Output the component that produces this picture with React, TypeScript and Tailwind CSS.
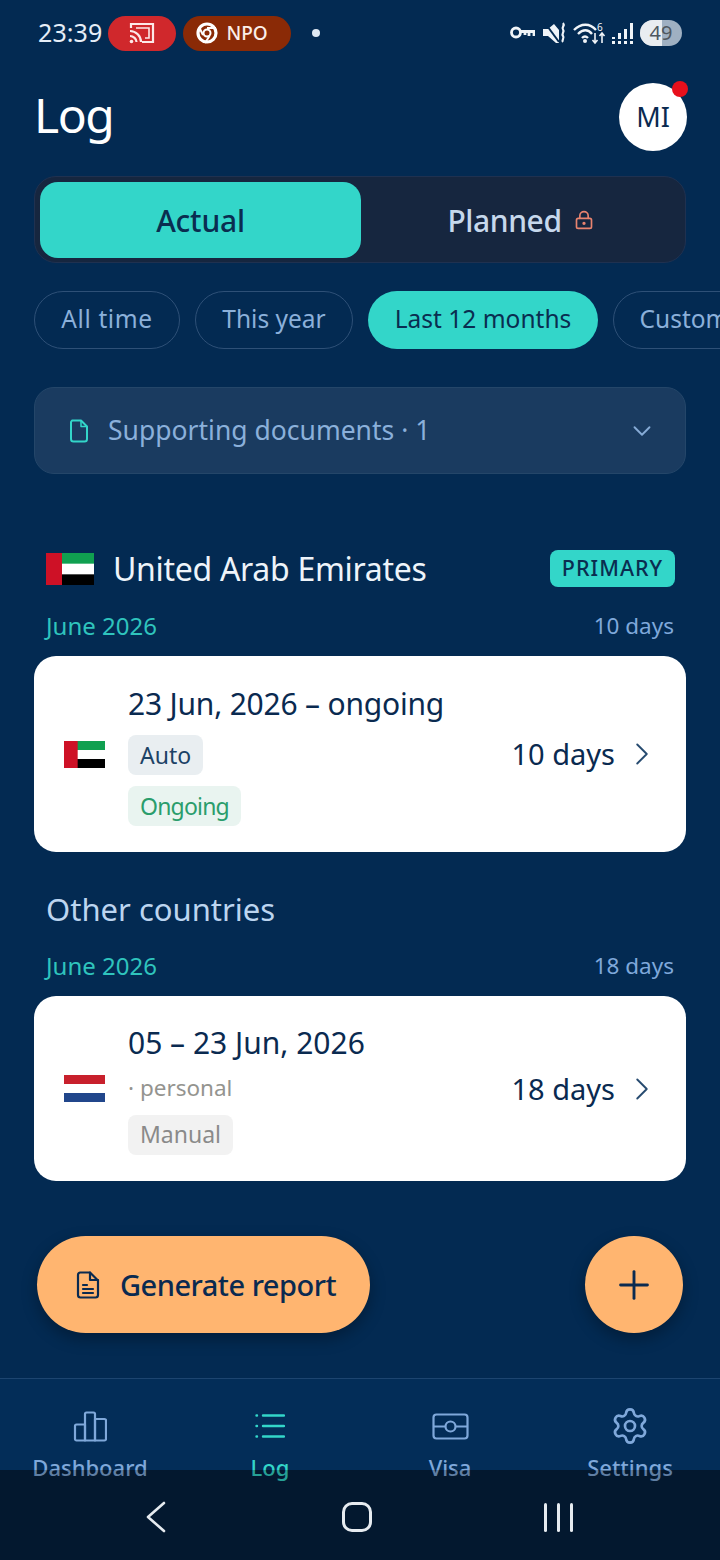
import React from "react";
import { ChevronRight, ChevronDown, Plus, Settings, LockKeyhole } from "lucide-react";

const UaeFlag = ({ w, h }: { w: number; h: number }) => (
  <svg width={w} height={h} viewBox="0 0 48 32" preserveAspectRatio="none" className="shrink-0">
    <rect width="48" height="32" fill="#fff" />
    <rect width="48" height="10.67" fill="#10a050" />
    <rect y="21.33" width="48" height="10.67" fill="#000" />
    <rect width="16" height="32" fill="#ce1126" />
  </svg>
);

const NlFlag = () => (
  <svg width="41" height="27" viewBox="0 0 41 27" className="shrink-0">
    <rect width="41" height="27" fill="#fff" />
    <rect width="41" height="9" fill="#c8202c" />
    <rect y="18" width="41" height="9" fill="#21468b" />
  </svg>
);

const Chip = ({ label, active, className = "" }: { label: string; active?: boolean; className?: string }) => (
  <div
    className={`h-[58px] rounded-full flex items-center justify-center pb-[2px] shrink-0 text-[24.5px] ${
      active ? "bg-[#33d6c9] text-[#0a2d50]" : "border border-[#2e5077] text-[#8bb0da]"
    } ${className}`}
  >
    {label}
  </div>
);

const Tag = ({ label, className }: { label: string; className: string }) => (
  <div className={`h-[40px] px-[12px] rounded-[8px] flex items-center text-[23px] w-fit ${className}`}>{label}</div>
);

const NavItem = ({ label, icon, active }: { label: string; icon: React.ReactNode; active?: boolean }) => (
  <div className={`flex-1 flex flex-col items-center ${active ? "text-[#33d6c9]" : "text-[#7fa8da]"}`}>
    <div className="h-[40px] flex items-center justify-center">{icon}</div>
    <div className="text-[22px] leading-[30px] mt-[6px] font-medium">{label}</div>
  </div>
);

export default function App() {
  return (
    <div
      className="relative w-[720px] h-[1560px] overflow-hidden bg-[#032a52] text-white"
      style={{ fontFamily: '"Noto Sans", sans-serif' }}
    >
      {/* status bar */}
      <div className="h-[66px] flex items-center pl-[38px] pr-[38px]">
        <span className="text-[25px] text-[#e6eef7] tracking-[0.1px]">23:39</span>
        <div className="ml-[6px] w-[68px] h-[35px] rounded-full bg-[#d0282c] flex items-center justify-center">
          <svg width="26" height="22" viewBox="0 0 26 22" fill="none" stroke="#fde8e8" strokeWidth="2.200">
            <path d="M2 6V2h22v18H13" />
            <path d="M1 9c6 0 11 5 11 11M1 14c3.500 0 6.500 3 6.500 6" />
            <circle cx="2.500" cy="19.500" r="1.800" fill="#fde8e8" stroke="none" />
            <path d="M7 6h13v10h-4" strokeWidth="1.600" />
          </svg>
        </div>
        <div className="ml-[7px] w-[108px] h-[35px] rounded-full bg-[#8a2a06] flex items-center pl-[13px] gap-[8px]">
          <svg width="22" height="22" viewBox="0 0 22 22" fill="none" stroke="#fff" strokeWidth="3.200">
            <circle cx="11" cy="11" r="9" />
            <circle cx="11" cy="11" r="3.500" strokeWidth="2" />
            <path d="M11 6h9M7 13 3 5M13.500 14 9 21" strokeWidth="2" />
          </svg>
          <span className="text-[19px] text-[#fbeee8] font-medium">NPO</span>
        </div>
        <div className="ml-[21px] w-[8px] h-[8px] rounded-full bg-[#dfe9f4]" />
        <div className="ml-auto flex items-center">
          <svg width="25" height="14" viewBox="0 0 25 14" fill="none" stroke="#f0f4f8" strokeWidth="2.800">
            <circle cx="6" cy="6.500" r="4.500" />
            <path d="M10.500 5.500H24V10M19 5.500V10M15 5.500V9" />
          </svg>
          <svg width="24" height="22" viewBox="0 0 24 22" className="ml-[8px]">
            <path d="M0 7h5l6-5 5 6v13h-3l-8-7H0z" fill="#f0f4f8" />
            <path d="M2 1 16 20" stroke="#032a52" strokeWidth="2" />
            <path d="M20 1c2.500 3-2 4 0 6.500s-2 4 0 6.500-2 4 0 6" fill="none" stroke="#f0f4f8" strokeWidth="2.200" />
          </svg>
          <svg width="33" height="24" viewBox="0 0 33 24" fill="none" stroke="#f0f4f8" strokeWidth="2.400" className="ml-[6px]">
            <path d="M1 9c7-7 16-7 22 0M5 13c5-5 10-5 14 0M9 17c2-2 4-2 6 0" />
            <circle cx="12" cy="20" r="2" fill="#f0f4f8" stroke="none" />
            <path d="M22 12v9M29 13v9M26.500 15l2.500-3 2.500 3M19.500 19l2.500 3 2.500-3" strokeWidth="1.600" />
            <text x="24" y="10" fontSize="10" fill="#f0f4f8" stroke="none">6</text>
          </svg>
          <div className="ml-[6px] flex items-end gap-[3px] h-[21px]">
            {[7, 11, 15, 21].map((bar) => (
              <div key={bar} className="w-[3px] flex flex-col justify-end gap-[2px]">
                <div className="w-[3px] bg-[#f0f4f8]" style={{ height: bar - 5 }} />
                <div className="w-[3px] h-[3px] bg-[#f0f4f8]" />
              </div>
            ))}
          </div>
          <div className="ml-[7px] relative w-[42px] h-[26px] rounded-full bg-[#9fb0c2] flex items-center justify-center overflow-hidden">
            <div className="absolute inset-y-0 left-0 w-[22px] bg-[#e9edf1]" />
            <span className="relative text-[20px] leading-[24px] text-[#4f5860]">49</span>
          </div>
        </div>
      </div>

      {/* header */}
      <div className="h-[99px] pl-[34px] pr-[33px] flex items-center justify-between">
        <div className="text-[48px] leading-[56px] tracking-[-1.500px] text-white mt-[-2px]">Log</div>
        <div className="relative w-[68px] h-[68px] mt-[3px] rounded-full bg-white flex items-center justify-center text-[#0a2a50] text-[27px]">
          MI
          <div className="absolute top-[-2px] right-[-1px] w-[16px] h-[16px] rounded-full bg-[#e8101c]" />
        </div>
      </div>

      <div className="px-[34px]">
        {/* segmented */}
        <div className="mt-[11px] h-[87px] rounded-[22px] bg-[#16263f] border border-[#1f3150] pt-[5px] px-[5px] pb-[4px] flex">
          <div className="w-[321px] rounded-[18px] bg-[#33d6c9] flex items-center justify-center text-[#0a2d50] text-[30px] tracking-[-0.200px] font-medium">
            Actual
          </div>
          <div className="flex-1 flex items-center justify-center gap-[12px] text-[#c6d8ec] text-[30px] tracking-[-0.400px] font-medium">
            Planned
            <LockKeyhole size={20} color="#e8836f" strokeWidth={2} />
          </div>
        </div>
      </div>

      {/* chips */}
      <div className="mt-[28px] ml-[34px] flex gap-[15px]">
        <Chip label="All time" className="w-[146px] tracking-[0.600px]" />
        <Chip label="This year" className="w-[158px]" />
        <Chip label="Last 12 months" active className="w-[230px]" />
        <Chip label="Custom" className="w-[142px]" />
      </div>

      <div className="px-[34px]">
        {/* docs */}
        <div className="mt-[38px] h-[87px] rounded-[20px] bg-[#1a3b60] border border-[#244669] flex items-center pl-[34px] pr-[28px]">
          <svg width="20" height="24" viewBox="0 0 20 24" fill="none" stroke="#33d6c9" strokeWidth="2" strokeLinejoin="round">
            <path d="M3 1.500h9l6 6V20a2.500 2.500 0 0 1-2.500 2.500h-11A2.500 2.500 0 0 1 2 20V3z" />
            <path d="M12 1.500V7.500h6" strokeWidth="1.500" />
          </svg>
          <span className="ml-[19px] text-[26.500px] text-[#8bb0da]">Supporting documents · 1</span>
          <ChevronDown size={30} color="#86abd6" strokeWidth={1.5} className="ml-auto" />
        </div>

        {/* UAE */}
        <div className="mt-[76px] h-[37px] pl-[12px] pr-[11px] flex items-center">
          <UaeFlag w={48} h={32} />
          <span className="ml-[19px] text-[32px] tracking-[-0.300px] text-[#eef4fa]">United Arab Emirates</span>
          <div className="ml-auto h-[37px] w-[125px] rounded-[8px] bg-[#33d6c9] flex items-center justify-center text-[#0a2d50] text-[21.500px] font-medium tracking-[1px]">
            PRIMARY
          </div>
        </div>
        <div className="mt-[25px] h-[28px] pl-[12px] pr-[12px] flex items-center justify-between">
          <span className="text-[24px] text-[#2fc4bd]">June 2026</span>
          <span className="text-[22.500px] text-[#7fa8da]">10 days</span>
        </div>

        <div className="mt-[16px] h-[196px] rounded-[22px] bg-white flex items-center pl-[30px] pr-[25px]">
          <UaeFlag w={41} h={27} />
          <div className="ml-[23px] mt-[2px] flex flex-col">
            <div className="text-[30px] tracking-[-0.200px] leading-[40px] text-[#0a2a50]">23 Jun, 2026 – ongoing</div>
            <Tag label="Auto" className="mt-[11px] bg-[#e9eef1] text-[#1c4266]" />
            <Tag label="Ongoing" className="mt-[11px] bg-[#e9f4f0] text-[#2a9d6c] tracking-[-0.800px]" />
          </div>
          <div className="ml-auto flex items-center gap-[8px] text-[29px] text-[#0a2a50]">
            10 days
            <ChevronRight size={38} color="#274b70" strokeWidth={1.2} />
          </div>
        </div>

        {/* Other */}
        <div className="mt-[35px] pl-[12px] text-[31px] leading-[44px] text-[#bcd5f0]">Other countries</div>
        <div className="mt-[21px] h-[28px] pl-[12px] pr-[12px] flex items-center justify-between">
          <span className="text-[24px] text-[#2fc4bd]">June 2026</span>
          <span className="text-[22.500px] text-[#7fa8da]">18 days</span>
        </div>
        <div className="mt-[16px] h-[185px] rounded-[22px] bg-white flex items-center pl-[30px] pr-[25px]">
          <NlFlag />
          <div className="ml-[23px] flex flex-col">
            <div className="text-[30px] leading-[40px] text-[#0a2a50]">05 – 23 Jun, 2026</div>
            <div className="text-[22.500px] leading-[32px] mt-[9px] text-[#94948f]">· personal</div>
            <Tag label="Manual" className="mt-[11px] bg-[#f2f2f2] text-[#8a8a8a]" />
          </div>
          <div className="ml-auto flex items-center gap-[8px] text-[29px] text-[#0a2a50]">
            18 days
            <ChevronRight size={38} color="#274b70" strokeWidth={1.2} />
          </div>
        </div>
      </div>

      {/* actions */}
      <div className="mt-[55px] pl-[37px] pr-[37px] flex justify-between">
        <div className="w-[333px] h-[97px] rounded-full bg-[#ffb570] shadow-[0_6px_16px_rgba(0,0,0,0.3)] flex items-center pl-[39px] gap-[20px] text-[#0a2a50] text-[29px] tracking-[-0.500px] font-medium">
          <svg width="24" height="28" viewBox="0 0 24 28" fill="none" stroke="#0a2a50" strokeWidth="2.200" strokeLinejoin="round" strokeLinecap="round">
            <path d="M4 1.500h10l8 8V24a2.500 2.500 0 0 1-2.500 2.500h-15A2.500 2.500 0 0 1 2 24V4a2.500 2.500 0 0 1 2-2.500z" />
            <path d="M14 1.500V9h8M7 14h4M7 18h10M7 22h10" />
          </svg>
          Generate report
        </div>
        <div className="w-[98px] h-[97px] rounded-full bg-[#ffb570] shadow-[0_6px_16px_rgba(0,0,0,0.3)] flex items-center justify-center">
          <Plus size={46} color="#0a2a50" strokeWidth={1.5} />
        </div>
      </div>

      {/* bottom nav */}
      <div className="mt-[45px] h-[182px] bg-[linear-gradient(#032d58_91px,#04203f_91px)] border-t border-[#1d4570] pt-[27px] flex">
        <NavItem
          label="Dashboard"
          icon={
            <svg width="34" height="31" viewBox="0 0 34 31" fill="none" stroke="currentColor" strokeWidth="2.200" strokeLinejoin="round">
              <path d="M2 15a1.500 1.500 0 0 1 1.500-1.500H12V29.500H3.500A1.500 1.500 0 0 1 2 28z" />
              <path d="M12 3a1.500 1.500 0 0 1 1.500-1.500h7A1.500 1.500 0 0 1 22 3v26.500H12z" />
              <path d="M22 8h9.500A1.500 1.500 0 0 1 33 9.500V28a1.500 1.500 0 0 1-1.500 1.500H22z" />
            </svg>
          }
        />
        <NavItem
          active
          label="Log"
          icon={
            <svg width="30" height="26" viewBox="0 0 30 26" fill="none" stroke="currentColor" strokeWidth="2.400" strokeLinecap="round">
              <path d="M8 2.500h21M8 13h21M8 23.500h21" />
              <path d="M1.500 2.500h.5M1.500 13h.5M1.500 23.500h.5" />
            </svg>
          }
        />
        <NavItem
          label="Visa"
          icon={
            <svg width="37" height="27" viewBox="0 0 37 27" fill="none" stroke="currentColor" strokeWidth="2.200" strokeLinejoin="round">
              <rect x="1.500" y="1.500" width="34" height="24" rx="3" />
              <circle cx="18.500" cy="13.500" r="5" />
              <path d="M1.500 13.500h12M23.500 13.500h12" />
            </svg>
          }
        />
        <NavItem label="Settings" icon={<Settings size={40} strokeWidth={1.6} />} />
      </div>

      {/* system nav, lies over the app's tab bar */}
      <div className="absolute left-0 right-0 bottom-0 h-[90px] bg-black/25 flex items-center pt-[4px] pl-[146px]">
        <svg width="20" height="32" viewBox="0 0 20 32" fill="none" stroke="#e6ebf0" strokeWidth="2.600" strokeLinecap="round" strokeLinejoin="round">
          <path d="M18 2 2 16l16 14" />
        </svg>
        <div className="ml-[176px] w-[30px] h-[30px] rounded-[10px] border-[3px] border-[#e6ebf0]" />
        <div className="ml-[172px] flex gap-[10px]">
          <div className="w-[3px] h-[29px] rounded-full bg-[#e6ebf0]" />
          <div className="w-[3px] h-[29px] rounded-full bg-[#e6ebf0]" />
          <div className="w-[3px] h-[29px] rounded-full bg-[#e6ebf0]" />
        </div>
      </div>
    </div>
  );
}
